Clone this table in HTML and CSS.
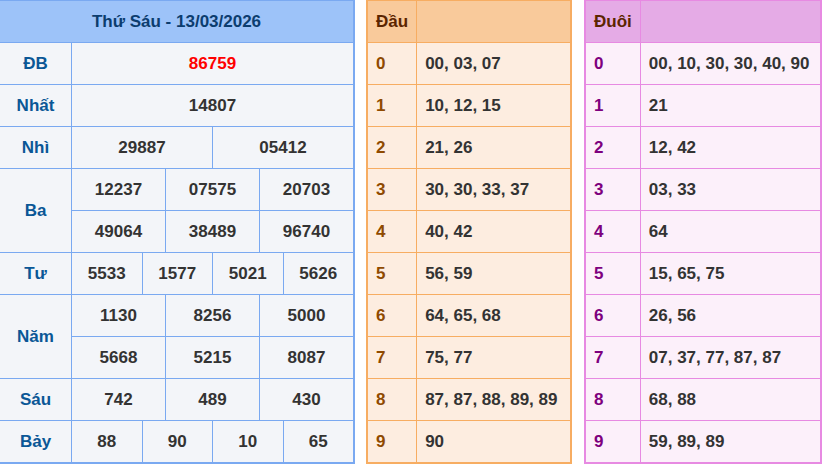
FILE: index.html
```html
<!DOCTYPE html>
<html lang="vi">
<head>
<meta charset="utf-8">
<title>KQXS Thứ Sáu - 13/03/2026</title>
<link rel="stylesheet" href="styles.css">
</head>
<body>
<div class="wrap">
  <div class="kq">
    <div class="kq-title">Thứ Sáu - 13/03/2026</div>

    <div class="lbl">ĐB</div>
    <div class="vals"><div class="v red">86759</div></div>

    <div class="lbl">Nhất</div>
    <div class="vals"><div class="v">14807</div></div>

    <div class="lbl">Nhì</div>
    <div class="vals"><div class="v">29887</div><div class="v">05412</div></div>

    <div class="lbl span2">Ba</div>
    <div class="vals"><div class="v">12237</div><div class="v">07575</div><div class="v">20703</div></div>
    <div class="vals"><div class="v">49064</div><div class="v">38489</div><div class="v">96740</div></div>

    <div class="lbl">Tư</div>
    <div class="vals"><div class="v">5533</div><div class="v">1577</div><div class="v">5021</div><div class="v">5626</div></div>

    <div class="lbl span2">Năm</div>
    <div class="vals"><div class="v">1130</div><div class="v">8256</div><div class="v">5000</div></div>
    <div class="vals"><div class="v">5668</div><div class="v">5215</div><div class="v">8087</div></div>

    <div class="lbl">Sáu</div>
    <div class="vals"><div class="v">742</div><div class="v">489</div><div class="v">430</div></div>

    <div class="lbl">Bảy</div>
    <div class="vals"><div class="v">88</div><div class="v">90</div><div class="v">10</div><div class="v">65</div></div>
  </div>

  <div class="lt dau">
    <div class="h">Đầu</div><div class="h"></div>
    <div class="k">0</div><div class="d">00, 03, 07</div>
    <div class="k">1</div><div class="d">10, 12, 15</div>
    <div class="k">2</div><div class="d">21, 26</div>
    <div class="k">3</div><div class="d">30, 30, 33, 37</div>
    <div class="k">4</div><div class="d">40, 42</div>
    <div class="k">5</div><div class="d">56, 59</div>
    <div class="k">6</div><div class="d">64, 65, 68</div>
    <div class="k">7</div><div class="d">75, 77</div>
    <div class="k">8</div><div class="d">87, 87, 88, 89, 89</div>
    <div class="k">9</div><div class="d">90</div>
  </div>

  <div class="lt duoi">
    <div class="h">Đuôi</div><div class="h"></div>
    <div class="k">0</div><div class="d">00, 10, 30, 30, 40, 90</div>
    <div class="k">1</div><div class="d">21</div>
    <div class="k">2</div><div class="d">12, 42</div>
    <div class="k">3</div><div class="d">03, 33</div>
    <div class="k">4</div><div class="d">64</div>
    <div class="k">5</div><div class="d">15, 65, 75</div>
    <div class="k">6</div><div class="d">26, 56</div>
    <div class="k">7</div><div class="d">07, 37, 77, 87, 87</div>
    <div class="k">8</div><div class="d">68, 88</div>
    <div class="k">9</div><div class="d">59, 89, 89</div>
  </div>
</div>
</body>
</html>
```

FILE: styles.css
```css
* { box-sizing: border-box; }
html, body { margin: 0; padding: 0; background: #fff; }
body {
  font-family: "Liberation Sans", Arial, sans-serif;
  font-size: 17px;
  font-weight: bold;
  color: #333;
  overflow: hidden;
}
.wrap {
  display: flex;
  align-items: flex-start;
  margin: -1px 0 0 -2px;
}

/* results table */
.kq {
  width: 357px;
  margin-right: 11px;
  display: grid;
  grid-template-columns: 71px 1fr;
  grid-auto-rows: 41px;
  gap: 1px;
  background: #7aa9f1;
  border: 2px solid #7aa9f1;
}
.kq-title {
  grid-column: 1 / -1;
  background: #9dc3f9;
  color: #0c3d6f;
  display: flex;
  align-items: center;
  justify-content: center;
}
.lbl {
  background: #f3f5f9;
  color: #0a5796;
  display: flex;
  align-items: center;
  justify-content: center;
}
.lbl.span2 { grid-row: span 2; }
.vals {
  display: flex;
  gap: 1px;
}
.v {
  flex: 1 1 0;
  background: #f3f5f9;
  display: flex;
  align-items: center;
  justify-content: center;
  color: #333;
}
.v.red { color: #ff0000; }

/* loto tables */
.lt {
  display: grid;
  grid-template-columns: max-content 1fr;
  grid-auto-rows: 41px;
  gap: 1px;
}
.lt > div {
  display: flex;
  align-items: center;
  padding: 0 8px;
  white-space: nowrap;
}
.lt .h { color: #5c2500; }
.lt .d { color: #333; }

.dau {
  width: 206px;
  margin-right: 12px;
  background: #f7ad62;
  border: 2px solid #f7ad62;
}
.dau .h { background: #f9ca9b; }
.dau .k, .dau .d { background: #fdede0; }
.dau .k { color: #8f4a00; }

.duoi {
  width: 238px;
  background: #e78ae2;
  border: 2px solid #e78ae2;
}
.duoi .h { background: #e5abe6; }
.duoi .k, .duoi .d { background: #fcf0fa; }
.duoi .k { color: #7e007e; }
```
